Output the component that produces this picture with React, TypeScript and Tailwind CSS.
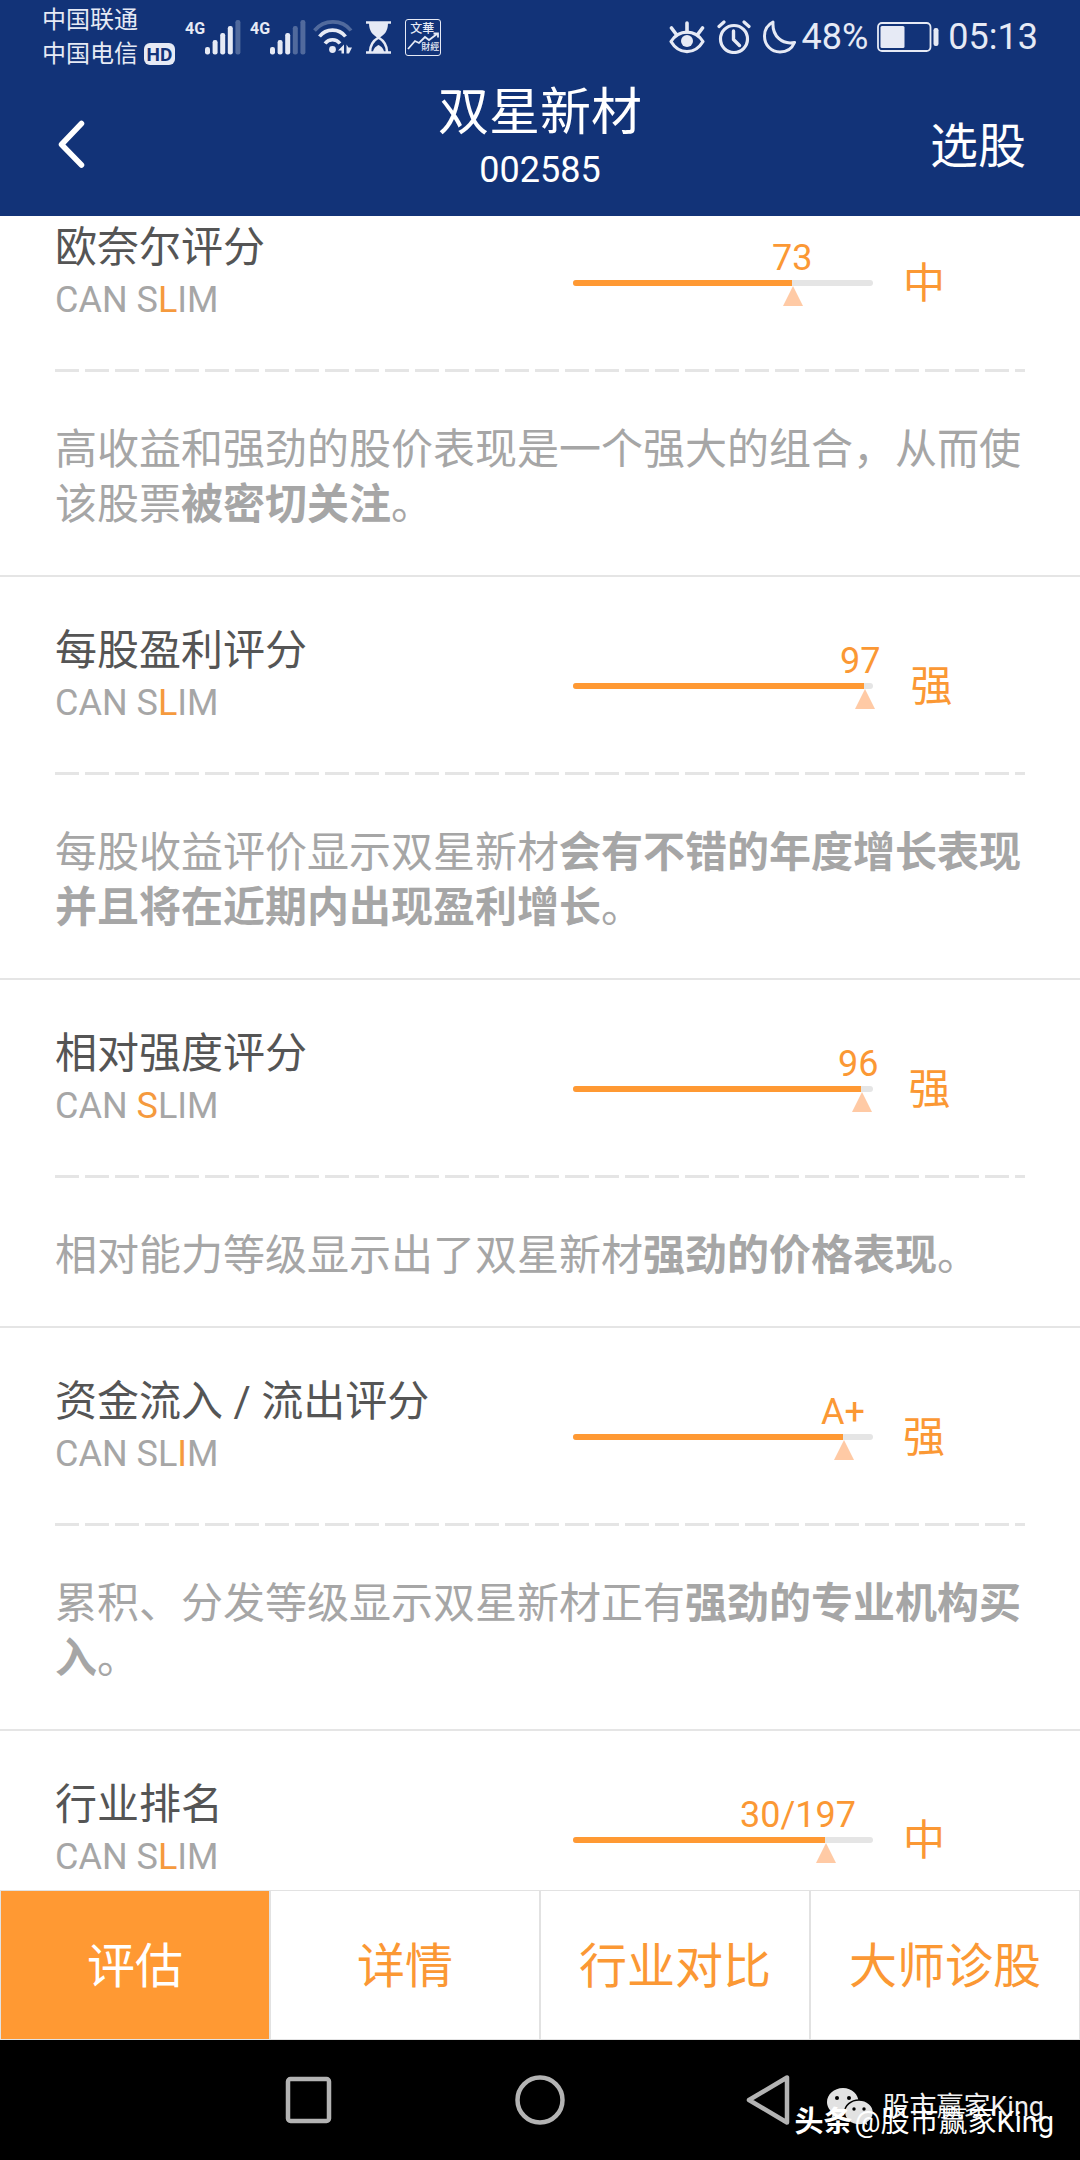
import { clsx } from "clsx";
import type { ReactNode } from "react";

type Rating = {
  title: string;
  letter: string;
  value: string;
  percent: number;
  labelOffset: number;
  level: string;
  text?: ReactNode;
};

const ratings: Rating[] = [
  {
    title: "欧奈尔评分",
    letter: "L",
    value: "73",
    percent: 73,
    labelOffset: 199,
    level: "中",
    text: (
      <>
        高收益和强劲的股价表现是一个强大的组合，从而使该股票<b>被密切关注</b>。
      </>
    ),
  },
  {
    title: "每股盈利评分",
    letter: "L",
    value: "97",
    percent: 97,
    labelOffset: 267,
    level: "强",
    text: (
      <>
        每股收益评价显示双星新材<b>会有不错的年度增长表现并且将在近期内出现盈利增长</b>。
      </>
    ),
  },
  {
    title: "相对强度评分",
    letter: "S",
    value: "96",
    percent: 96,
    labelOffset: 265,
    level: "强",
    text: (
      <>
        相对能力等级显示出了双星新材<b>强劲的价格表现</b>。
      </>
    ),
  },
  {
    title: "资金流入 / 流出评分",
    letter: "I",
    value: "A+",
    percent: 90,
    labelOffset: 248,
    level: "强",
    text: (
      <>
        累积、分发等级显示双星新材正有<b>强劲的专业机构买入</b>。
      </>
    ),
  },
  {
    title: "行业排名",
    letter: "L",
    value: "30/197",
    percent: 84,
    labelOffset: 167,
    level: "中",
  },
];

const tabs = ["评估", "详情", "行业对比", "大师诊股"];

function Signal({ bars }: { bars: number }) {
  const tops = [27, 20, 13, 6, 0];
  return (
    <div className="flex items-start">
      <span className="text-[16px] leading-[18px] font-bold">4G</span>
      <svg width="36" height="35" viewBox="0 0 36 35" fill="currentColor">
        {tops.map((y, i) => (
          <rect key={y} x={i * 7.6} y={y} width="5" height={34.5 - y} rx="2.2" opacity={i < bars ? 1 : 0.3} />
        ))}
      </svg>
    </div>
  );
}

function StatusBar() {
  return (
    <div className="flex h-[72px] items-center justify-between pt-0.5 pr-[42px] pl-[42px] text-[#e6eaf5]">
      <div className="flex items-center">
        <div className="text-[24px] leading-[34px]">
          <div>中国联通</div>
          <div className="flex items-center gap-1.5">
            中国电信
            <span className="flex h-[22px] w-[31px] items-center justify-center rounded-md bg-[#e6eaf5] text-[19px] leading-none font-bold text-[#123378]">
              HD
            </span>
          </div>
        </div>
        <div className="ml-[10px] flex gap-[9px]">
          <Signal bars={4} />
          <Signal bars={3} />
        </div>
        <svg className="ml-[7px]" width="40" height="34" viewBox="0 0 40 34" fill="none" stroke="currentColor" strokeWidth="3.6">
          <path d="M1.5 10.5C11 -1 29 -1 38 10.5" opacity="0.3" />
          <path d="M6.5 16.5C13 8 26 8 32.5 16.5" />
          <path d="M12 23.5C16 18.5 23 18.5 27 23.5" />
          <circle cx="19.5" cy="29.5" r="3.4" fill="currentColor" stroke="none" />
          <path d="M31 24.500v9h-2.500v-3h-3.500zM33.500 24.500v9h2.500l3-6h-3.500z" fill="currentColor" stroke="none" />
        </svg>
        <svg className="ml-[13px]" width="25" height="33" viewBox="0 0 25 33" fill="none" stroke="currentColor">
          <path d="M0 1.5h25M0 31.5h25" strokeWidth="2.6" />
          <path d="M3 2h19c0 8-3.500 11.500-8 14.500h-3C6.500 13.500 3 10 3 2z" fill="currentColor" stroke="none" />
          <path d="M4 31c0-8 3.500-11.500 8.500-14.500C17.500 19.500 21 23 21 31" strokeWidth="2.6" />
          <path d="M7 31c.5-4 3-5.500 5.500-7 2.500 1.500 5 3 5.500 7z" fill="currentColor" stroke="none" />
        </svg>
        <div className="relative ml-[14px] h-[37px] w-[36px] rounded-[3px] border border-[#e6eaf5]">
          <span className="absolute top-[2px] left-[4px] text-[12px] leading-[14px] font-medium">文華</span>
          <svg className="absolute inset-0" width="34" height="35" viewBox="0 0 34 35" fill="none" stroke="currentColor" strokeWidth="1.8">
            <path d="M2 29l7-8 4 2 6-6 4 3 8-6M27.500 13.500H32v4" />
          </svg>
          <span className="absolute right-px bottom-[2px] text-[9px] leading-[11px] font-medium">財經</span>
        </div>
      </div>

      <div className="flex items-center text-[36px] leading-none">
        <svg className="mr-3" width="36" height="33" viewBox="0 0 36 33" fill="none" stroke="currentColor" strokeWidth="3.2">
          <path d="M2 20.500C10 8 26 8 34 20.500 26 34 10 34 2 20.500z" strokeLinejoin="round" />
          <circle cx="18" cy="20" r="6" fill="currentColor" stroke="none" />
          <path d="M18 2v9M2.500 7l4.500 6M33.500 7L29 13" strokeLinecap="round" strokeWidth="3.6" />
        </svg>
        <svg className="mr-3" width="34" height="34" viewBox="0 0 34 34" fill="none" stroke="currentColor" strokeWidth="3.2">
          <circle cx="17" cy="19" r="13.5" />
          <path d="M16.500 11v8.500l6 6" strokeWidth="3.4" strokeLinecap="round" strokeLinejoin="round" />
          <path d="M2 6.500L7 2M32 6.500L27 2" strokeLinecap="round" />
        </svg>
        <svg className="mr-1.5" width="33" height="34" viewBox="0 0 33 34" fill="none" stroke="currentColor" strokeWidth="3" strokeLinejoin="round">
          <path d="M10 2C4 5 1.500 10.500 1.500 16 1.500 25.500 8.500 32 17 32c6.500 0 12-3.500 14.500-9.500C19 25 9 16 10 2z" />
        </svg>
        <span>48%</span>
        <svg className="mx-[9px]" width="62" height="30" viewBox="0 0 62 30" fill="none">
          <rect x="1" y="1" width="52.5" height="28" rx="4" stroke="currentColor" strokeWidth="1.8" />
          <rect x="3.5" y="4" width="24" height="22" rx="1.5" fill="currentColor" />
          <rect x="56.5" y="6" width="5" height="18" rx="2.2" fill="currentColor" />
        </svg>
        <span>05:13</span>
      </div>
    </div>
  );
}

function CanSlim({ letter }: { letter: string }) {
  const [before, after] = "CAN SLIM".split(letter);
  return (
    <p className="text-[36px] leading-[48px] text-[#a6a6a6]">
      {before}
      <span className="text-[#f59a3e]">{letter}</span>
      {after}
    </p>
  );
}

function RatingCard({ rating }: { rating: Rating }) {
  return (
    <section className="border-b-2 border-[#e5e5e5] px-[55px] pt-[46px] pb-[43px]">
      <div className="flex items-start justify-between pb-[45px]">
        <div>
          <h2 className="text-[42px] leading-14 text-[#555]">{rating.title}</h2>
          <CanSlim letter={rating.letter} />
        </div>
        <div className="flex w-[452px] shrink-0 items-start gap-[30px] text-[#fb9834]">
          <div className="mt-4 min-w-[300px]">
            <div className="w-fit text-[36px] leading-[44px]" style={{ marginLeft: rating.labelOffset }}>
              {rating.value}
            </div>
            <div className="relative w-[300px]">
              <div className="h-1.5 overflow-hidden rounded-full bg-[#e5e5e5]">
                <div className="h-full bg-[#ff9933]" style={{ width: `${rating.percent}%` }} />
              </div>
              <svg
                className="absolute top-1.5 -ml-[9px]"
                style={{ left: `${rating.percent}%` }}
                width="20"
                height="20"
                viewBox="0 0 20 20"
              >
                <path d="M10 0l10 20H0z" fill="#ffcaa5" />
              </svg>
            </div>
          </div>
          <span className="mt-9 text-[42px] leading-14">{rating.level}</span>
        </div>
      </div>
      {rating.text && (
        <>
          <div className="h-[3px] bg-[repeating-linear-gradient(90deg,#e5e5e5_0_24px,transparent_24px_30px)]" />
          <p className="pt-[50px] text-[42px] leading-[55px] text-[#a6a6a6]">{rating.text}</p>
        </>
      )}
    </section>
  );
}

function SystemNav() {
  return (
    <nav className="relative h-[120px] shrink-0 bg-black text-[#b3b3b3]">
      <div className="flex h-full items-center justify-center gap-[180px]">
        <button aria-label="最近任务">
          <svg width="52" height="52" viewBox="0 0 52 52" fill="none" stroke="currentColor" strokeWidth="4.5">
            <rect x="6" y="5" width="41" height="42" rx="2.5" />
          </svg>
        </button>
        <button aria-label="主屏幕">
          <svg width="52" height="52" viewBox="0 0 52 52" fill="none" stroke="currentColor" strokeWidth="4.5">
            <circle cx="26" cy="26" r="22.5" />
          </svg>
        </button>
        <button aria-label="返回">
          <svg width="52" height="52" viewBox="0 0 52 52" fill="none" stroke="currentColor" strokeWidth="4.5" strokeLinejoin="round">
            <path d="M41 3.500v45L3 26z" />
          </svg>
        </button>
      </div>
      {/* account watermarks, one laid over the other */}
      <div className="absolute right-9 bottom-[34px] flex items-center gap-2 text-[27px] leading-8 text-[#f0f0f0]">
        <svg width="47" height="38" viewBox="0 0 47 38">
          <path d="M16 0C7 0 0 6.500 0 14c0 4.500 2.500 8.500 6 11l-1.500 5 6-3c6 2 21-2 21-13C31.500 6.500 25 0 16 0z" fill="#e2e2e2" />
          <path d="M32 12c-8 0-14.500 5.500-14.500 12.500S24 37 32 37c2 0 3.500-.3 5-.8l4.500 2.300-1-4c3.500-2.300 6-5.800 6-10C46.500 17.500 40 12 32 12z" fill="#e2e2e2" stroke="#000" strokeWidth="1.5" />
          <g fill="#000">
            <circle cx="10" cy="10" r="2" />
            <circle cx="22" cy="10" r="2" />
            <circle cx="27" cy="21" r="1.7" />
            <circle cx="37" cy="21" r="1.7" />
          </g>
        </svg>
        <span>股市赢家King</span>
      </div>
      <div className="absolute right-[26px] bottom-[22px] flex items-center gap-0.5 text-[29px] leading-8 text-white">
        <b>头条</b>
        <span>@股市赢家King</span>
      </div>
    </nav>
  );
}

export default function App() {
  return (
    <div
      lang="zh-CN"
      className="flex h-screen flex-col bg-white font-['Roboto','Noto_Sans_CJK_SC',sans-serif]"
    >
      <header className="shrink-0 bg-[#123378]">
        <StatusBar />
        <div className="grid h-36 grid-cols-[1fr_auto_1fr] items-center px-[54px] text-white">
          <button aria-label="返回" className="justify-self-start">
            <svg width="32" height="48" viewBox="0 0 32 48" fill="none" stroke="currentColor" strokeWidth="5.5" strokeLinecap="round" strokeLinejoin="round">
              <path d="M27.500 3.500L7.500 24.500l20 20.500" />
            </svg>
          </button>
          <div className="pb-3 text-center">
            <h1 className="text-[51px] leading-[64px]">双星新材</h1>
            <p className="text-[36px] leading-[50px]">002585</p>
          </div>
          <button className="justify-self-end pt-1.5 text-[48px] leading-[64px]">选股</button>
        </div>
      </header>

      <main className="min-h-0 flex-1 overflow-hidden">
        <div className="-mt-[42px]">
          {ratings.map((rating) => (
            <RatingCard key={rating.title} rating={rating} />
          ))}
        </div>
      </main>

      <div role="tablist" className="grid h-[150px] shrink-0 grid-cols-4">
        {tabs.map((tab, i) => (
          <button
            key={tab}
            role="tab"
            aria-selected={i === 0}
            className={clsx(
              "border border-[#e2e2e2] pt-1 text-[48px]",
              i === 0 ? "bg-[#ff9933] text-white" : "bg-white text-[#fb9834]"
            )}
          >
            {tab}
          </button>
        ))}
      </div>
      <SystemNav />
    </div>
  );
}
